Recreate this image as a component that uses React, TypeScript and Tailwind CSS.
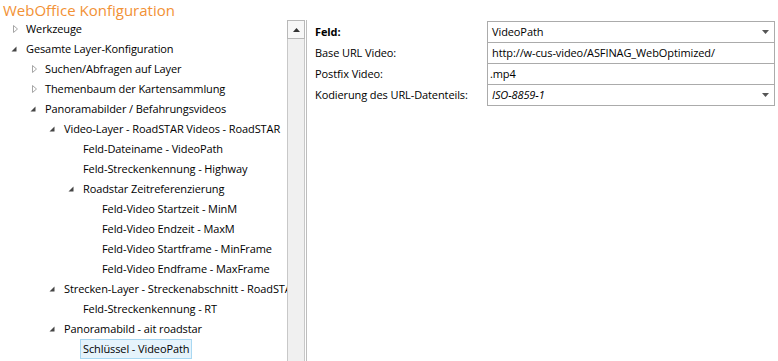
import React from "react";

type Node = { label: string; level: number; icon?: "open" | "closed"; selected?: boolean };

const nodes: Node[] = [
  { label: "Werkzeuge", level: 0, icon: "closed" },
  { label: "Gesamte Layer-Konfiguration", level: 0, icon: "open" },
  { label: "Suchen/Abfragen auf Layer", level: 1, icon: "closed" },
  { label: "Themenbaum der Kartensammlung", level: 1, icon: "closed" },
  { label: "Panoramabilder / Befahrungsvideos", level: 1, icon: "open" },
  { label: "Video-Layer - RoadSTAR Videos - RoadSTAR", level: 2, icon: "open" },
  { label: "Feld-Dateiname - VideoPath", level: 3 },
  { label: "Feld-Streckenkennung - Highway", level: 3 },
  { label: "Roadstar Zeitreferenzierung", level: 3, icon: "open" },
  { label: "Feld-Video Startzeit - MinM", level: 4 },
  { label: "Feld-Video Endzeit - MaxM", level: 4 },
  { label: "Feld-Video Startframe - MinFrame", level: 4 },
  { label: "Feld-Video Endframe - MaxFrame", level: 4 },
  { label: "Strecken-Layer - Streckenabschnitt - RoadSTAR", level: 2, icon: "open" },
  { label: "Feld-Streckenkennung - RT", level: 3 },
  { label: "Panoramabild - ait roadstar", level: 2, icon: "open" },
  { label: "Schlüssel - VideoPath", level: 3, selected: true },
];

const pads: Record<number, string> = {
  0: "pl-[8px]",
  1: "pl-[27px]",
  2: "pl-[46px]",
  3: "pl-[65px]",
  4: "pl-[84px]",
};

function Closed() {
  return (
    <svg width="18" height="20" viewBox="0 0 18 20">
      <path d="M5.5 6.5 L9.5 10 L5.5 13.5 Z" fill="none" stroke="#a6a6a6" strokeWidth="1" />
    </svg>
  );
}
function Open() {
  return (
    <svg width="18" height="20" viewBox="0 0 18 20">
      <path d="M8.5 7.5 L8.5 12.5 L3.5 12.5 Z" fill="#454545" />
    </svg>
  );
}

function DropArrow() {
  return (
    <svg width="7" height="4" viewBox="0 0 7 4" className="mr-[5px]">
      <path d="M0 0 L7 0 L3.5 4 Z" fill="#555" />
    </svg>
  );
}

export default function App() {
  const font = { fontFamily: '"Open Sans", "Noto Sans", sans-serif' };
  return (
    <div className="w-[778px] h-[361px] bg-white overflow-hidden flex flex-col text-[11px] tracking-[-0.1px] text-[#000]" style={font}>
      <div className="h-[20px] pl-[3px] text-[15px] tracking-normal leading-[20px] text-[#f29135]">WebOffice Konfiguration</div>
      <div className="flex flex-1 min-h-0">
        <div className="w-[287px] overflow-hidden flex flex-col -mt-[1px]">
          {nodes.map((n, i) => (
            <div key={i} className={`h-[20px] flex items-center whitespace-nowrap ${pads[n.level]}`}>
              <div className="w-[18px] h-[20px] shrink-0">
                {n.icon === "closed" ? <Closed /> : n.icon === "open" ? <Open /> : null}
              </div>
              {n.selected ? (
                <span className="-ml-[3px] px-[2px] h-[20px] leading-[18px] bg-[#e5f3fb] border border-[#a9d8f2]">{n.label}</span>
              ) : (
                <span>{n.label}</span>
              )}
            </div>
          ))}
        </div>
        <div className="w-[18px] bg-[#f0f0f0] border-l border-r border-[#c8c8c8] flex flex-col">
          <div className="h-[19px] border border-[#b8b8b8] bg-[#f7f7f7] flex items-center justify-center -mx-px">
            <svg width="7" height="4" viewBox="0 0 7 4">
              <path d="M0 4 L7 4 L3.5 0 Z" fill="#333" />
            </svg>
          </div>
        </div>
        <div className="w-[2px] border-r border-[#bdbdbd]" />
        <div className="flex-1 pl-[8px] pr-[3px] pt-[1px]">
          <div className="flex">
            <div className="w-[172px] flex flex-col">
              <div className="h-[21px] leading-[21px] font-bold">Feld:</div>
              <div className="h-[21px] leading-[21px]">Base URL Video:</div>
              <div className="h-[21px] leading-[21px]">Postfix Video:</div>
              <div className="h-[21px] leading-[21px]">Kodierung des URL-Datenteils:</div>
            </div>
            <div className="flex-1 flex flex-col border border-[#ababab] divide-y divide-[#ababab]">
              <div className="h-[21px] flex items-center justify-between pl-[4px]">
                <span>VideoPath</span>
                <DropArrow />
              </div>
              <div className="h-[21px] flex items-center pl-[4px]">http://w-cus-video/ASFINAG_WebOptimized/</div>
              <div className="h-[21px] flex items-center pl-[2px]">.mp4</div>
              <div className="h-[20px] flex items-center justify-between pl-[4px]">
                <span className="italic">ISO-8859-1</span>
                <DropArrow />
              </div>
            </div>
          </div>
        </div>
      </div>
    </div>
  );
}
